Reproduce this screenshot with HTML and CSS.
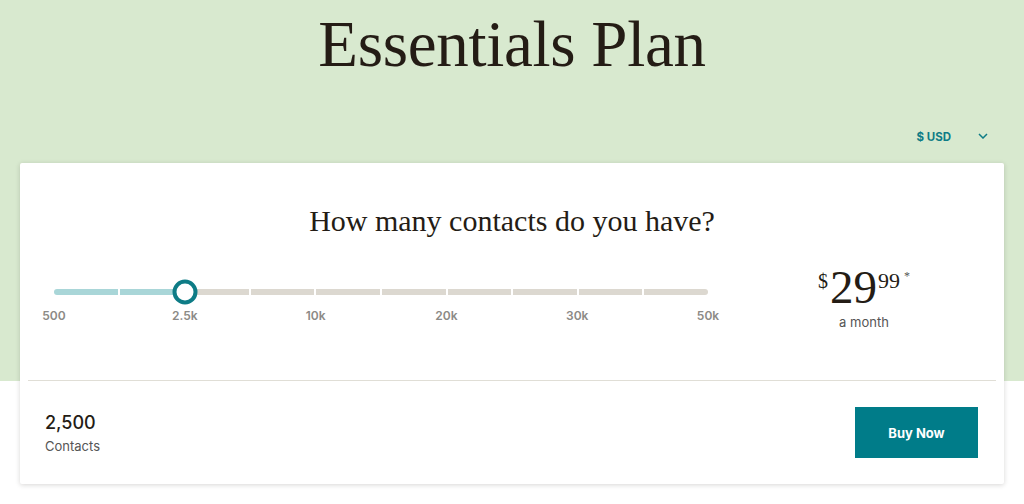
FILE: index.html
```html
<!DOCTYPE html>
<html>
<head>
<meta charset="utf-8">
<link rel="stylesheet" href="styles.css">
</head>
<body>
<div class="hero">
  <h1 class="title">Essentials Plan</h1>
  <div class="currency-row">
    <div class="currency">$ USD
      <svg class="chev" width="10" height="6" viewBox="0 0 10 6"><path d="M1 1 L5 5 L9 1" fill="none" stroke="#0e7c86" stroke-width="1.5"/></svg>
    </div>
  </div>
</div>
<div class="card">
  <div class="card-top">
    <h2 class="question">How many contacts do you have?</h2>
    <div class="calc">
      <div class="slider">
        <div class="track">
          <span class="seg fill"></span><span class="seg fill"></span><span class="seg"></span><span class="seg"></span><span class="seg"></span><span class="seg"></span><span class="seg"></span><span class="seg"></span><span class="seg"></span><span class="seg"></span>
          <span class="thumb"></span>
        </div>
        <div class="ticks">
          <span class="tick" style="left:0%">500</span>
          <span class="tick" style="left:20%">2.5k</span>
          <span class="tick" style="left:40%">10k</span>
          <span class="tick" style="left:60%">20k</span>
          <span class="tick" style="left:80%">30k</span>
          <span class="tick" style="left:100%">50k</span>
        </div>
      </div>
      <div class="price">
        <div class="amount"><span class="cur">$</span><span class="big">29</span><span class="cents">99</span><span class="star">*</span></div>
        <div class="per">a month</div>
      </div>
    </div>
  </div>
  <div class="card-bottom">
    <div class="count">
      <div class="num">2,500</div>
      <div class="lbl">Contacts</div>
    </div>
    <button class="buy">Buy Now</button>
  </div>
</div>
</body>
</html>
```

FILE: styles.css
```css
html, body { margin: 0; padding: 0; }
body {
  background: linear-gradient(#d8e9cf 0, #d8e9cf 381px, #ffffff 381px);
  width: 1024px;
  height: 504px;
  overflow: hidden;
  font-family: "Inter", "Liberation Sans", sans-serif;
  color: #241c15;
}
.hero { padding-top: 4px; }
.title {
  margin: 0;
  text-align: center;
  font-family: "Liberation Serif", serif;
  font-weight: normal;
  font-size: 65px;
  line-height: 80px;
  color: #241c15;
  letter-spacing: -0.3px;
}
.currency-row {
  display: flex;
  justify-content: flex-end;
  padding: 46px 36px 0 0;
  height: 33px;
  box-sizing: border-box;
}
.currency {
  font-size: 11.5px;
  font-weight: 700;
  color: #0e7c86;
  display: flex;
  align-items: center;
  gap: 27px;
  height: 14px;
}
.chev { margin-top: -2px; }
.card {
  margin: 33px 20px 0;
  background: #fff;
  border-radius: 2px;
  box-shadow: 0 1px 5px rgba(36, 28, 21, 0.18);
  height: 321px;
}
.card-top {
  margin: 0 8px;
  border-bottom: 1px solid #e0ded6;
  height: 218px;
  box-sizing: border-box;
  padding-top: 40px;
}
.question {
  margin: 0;
  text-align: center;
  font-family: "Liberation Serif", serif;
  font-weight: normal;
  font-size: 30px;
  line-height: 36px;
  color: #241c15;
}
.calc {
  display: flex;
  align-items: flex-start;
  padding: 50px 0 0 26px;
}
.slider { width: 654px; position: relative; }
.track {
  position: relative;
  display: flex;
  gap: 2px;
  height: 6px;
  border-radius: 3px;
}
.seg { flex: 1; background: #dcd8d0; }
.seg:first-child { border-radius: 3px 0 0 3px; }
.seg:nth-child(10) { border-radius: 0 3px 3px 0; }
.seg.fill { background: #a9d6d8; }
.thumb {
  position: absolute;
  left: 20%;
  top: 3px;
  width: 17px;
  height: 17px;
  border: 4px solid #0e7c86;
  border-radius: 50%;
  background: #fff;
  transform: translate(-50%, -50%);
}
.ticks { position: relative; height: 30px; margin-top: 13px; }
.tick {
  position: absolute;
  top: 0;
  transform: translateX(-50%);
  font-size: 12px;
  font-weight: 600;
  color: #8c8a86;
}
.price {
  flex: 1;
  display: flex;
  flex-direction: column;
  align-items: center;
  margin-top: -24px;
  padding-left: 24px;
}
.amount {
  display: flex;
  align-items: flex-start;
  font-family: "Liberation Serif", serif;
  color: #241c15;
  line-height: 1;
}
.cur { font-size: 20px; margin-top: 6px; margin-right: 2px; }
.big { font-size: 47px; line-height: 44px; }
.cents { font-size: 22px; margin-top: 5px; margin-left: 1px; }
.star { font-size: 12px; margin-left: 4px; margin-top: 5px; color: #555; }
.per { font-size: 13px; color: #555; margin-top: 5px; line-height: 16px; }
.card-bottom {
  display: flex;
  justify-content: space-between;
  align-items: center;
  padding: 26px 26px 0 25px;
}
.num { font-size: 18px; font-weight: 500; color: #241c15; line-height: 22px; }
.lbl { font-size: 13px; color: #555; margin-top: 4px; }
.buy {
  width: 123px;
  height: 51px;
  border: none;
  background: #007c89;
  color: #fff;
  font-family: "Inter", "Liberation Sans", sans-serif;
  font-size: 13px;
  font-weight: 700;
}
```
